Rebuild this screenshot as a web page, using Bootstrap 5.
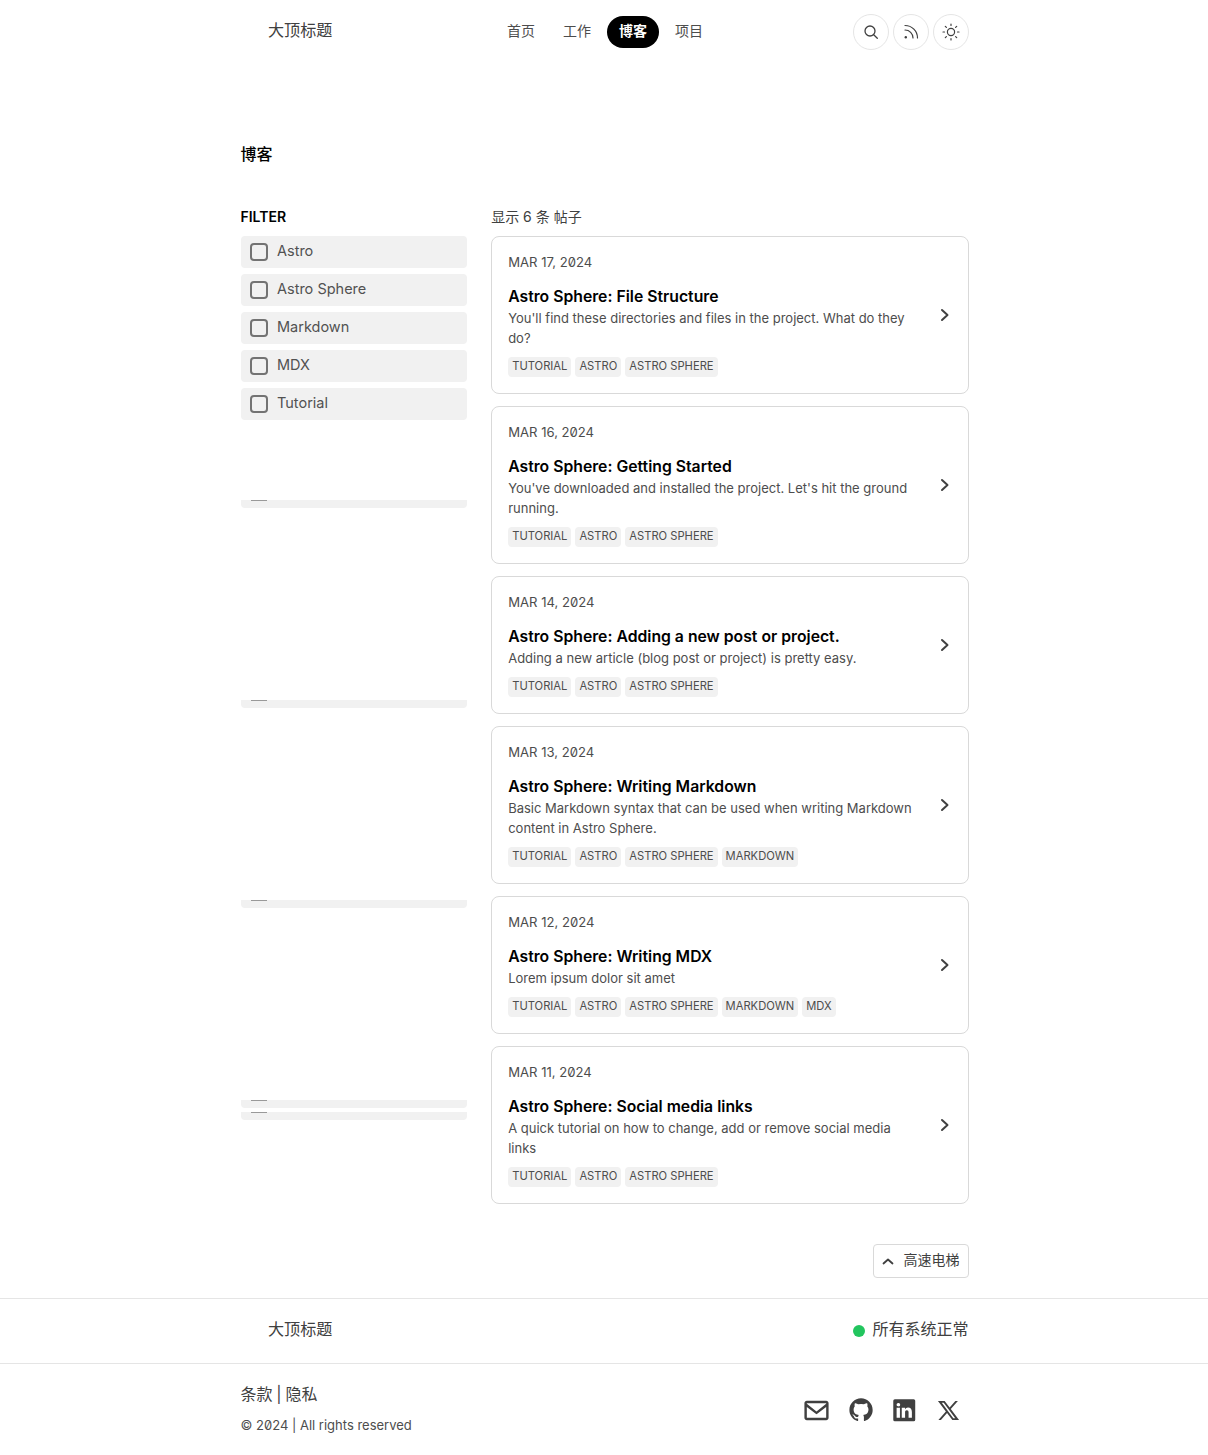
<!DOCTYPE html>
<html lang="zh">
<head>
<meta charset="utf-8">
<title>博客</title>
<link href="https://cdn.jsdelivr.net/npm/bootstrap@5.3.0/dist/css/bootstrap.min.css" rel="stylesheet">
<style>
body{font-family:Inter,"Noto Sans CJK SC",sans-serif;color:#404040;font-size:14px;line-height:20px;background:#fff}
.shell{width:728px;margin-left:240.5px}
.top-bar{height:64px;padding-top:14px}
.brand{width:92.5px;padding-left:27.5px;font-size:16.1px;line-height:32px;font-weight:400;color:#404040;text-decoration:none;white-space:nowrap}
.foot-inner .brand{margin-bottom:5px}
.main-nav{margin-left:162px;height:32px;margin-top:2px}
.main-nav a{padding:5px 12px 7px;line-height:20px;color:#4d4d4d;text-decoration:none;border-radius:999px;font-size:14px}
.main-nav a.on{background:#000;color:#fff;font-weight:600}
.round-btn{width:36px;height:36px;border:1px solid #e5e5e5;border-radius:50%;color:#404040}
.page-title{font-size:16px;line-height:24px;font-weight:500;color:#000;margin:78px 0 0}
.columns{margin-top:41px;gap:24px}
.side{width:226.67px;flex:none}
.content{flex:1;min-width:0}
.head-line{height:20px;margin-bottom:9px}
.filter-head{font-size:14px;font-weight:600;color:#000;line-height:20px;text-transform:uppercase}
.filter-item{height:32px;background:#f1f1f1;border-radius:4px;margin-bottom:6px;padding:0 9.5px;font-size:14.5px;color:#525252;gap:9px}
.filter-item span:last-child{margin-bottom:2px}
.box{width:18px;height:18px;border:2px solid #737373;border-radius:4px;flex:none}
.stub{height:8px;background:#f1f1f1;border-radius:0 0 4px 4px;padding-left:10.5px}
.stub i{display:block;width:16px;height:1px;background:#999}
.s1{margin-top:80px}.s2,.s3,.s4{margin-top:192px}.s5{margin-top:4px}
.post{border:1px solid #d9d9d9;border-radius:8px;padding:15px 16px 16px;margin-bottom:12px;color:#4d4d4d}
.post:last-child{margin-bottom:0}
.post-date{font-size:13.1px;line-height:20px;text-transform:uppercase;margin-bottom:12px;font-feature-settings:"zero"}
.post-title{font-size:15.75px;line-height:24px;font-weight:600;color:#000;margin:0 0 -1px;padding-top:1px}
.post-desc{font-size:13px;line-height:20px;margin:0}
.tags{margin-top:9px;gap:4px}
.chip{height:20px;background:#f1f1f1;border-radius:4px;padding:0 4px;font-size:11.2px;line-height:18px;text-transform:uppercase}
.up-btn{width:96px;height:34px;border:1px solid #d9d9d9;border-radius:4px;margin-top:40px;margin-left:auto;font-size:14px;color:#404040;gap:9px;padding-left:7px}
.up-btn span{margin-bottom:2px}
.foot-row{border-top:1px solid #e5e5e5;margin-top:20px}
.foot-inner{height:64px}
.status{font-size:16px;gap:7px;color:#404040}
.status span:last-child{margin-bottom:5px}
.dot{width:12px;height:12px;border-radius:50%;background:#22c55e}
.foot-low{border-top:1px solid #e5e5e5;height:91px;padding-top:20px}
.legal{font-size:16px;line-height:20px;margin-bottom:11px;word-spacing:-.7px}
.copy{font-size:13px;line-height:20px;font-feature-settings:"zero";color:#4d4d4d}
.socials{gap:4px;margin-top:6px}
.soc{width:40px;height:40px;color:#404040}
.soc-envelope{width:29px;height:29px}
.soc-github{width:28px;height:28px}
.soc-linkedin{width:26.500px;height:26.500px}
.soc-x{width:23px;height:23px}
svg{display:block}
</style>
</head>
<body>
<header class="shell top-bar d-flex">
  <a class="brand" href="#">大顶标题</a>
  <nav class="main-nav d-flex gap-1">
    <a href="#">首页</a><a href="#">工作</a><a class="on" href="#">博客</a><a href="#">项目</a>
  </nav>
  <div class="ms-auto d-flex gap-1">
    <div class="round-btn d-flex align-items-center justify-content-center">
      <svg width="18" height="18" viewBox="0 0 18 18" fill="none" stroke="currentColor" stroke-width="1.3" stroke-linecap="round"><circle cx="8" cy="8" r="5"/><path d="M11.7 11.7l3.6 3.6"/></svg>
    </div>
    <div class="round-btn d-flex align-items-center justify-content-center">
      <svg width="18" height="18" viewBox="0 0 18 18" fill="none" stroke="currentColor" stroke-width="1.2" stroke-linecap="round"><path d="M3 2.500c7 0 12.500 5.500 12.500 12.500"/><path d="M3 7c4.500 0 8 3.500 8 8"/><circle cx="3.800" cy="14.200" r="1.200" fill="currentColor" stroke="none"/></svg>
    </div>
    <div class="round-btn d-flex align-items-center justify-content-center">
      <svg width="18" height="18" viewBox="0 0 18 18" fill="none" stroke="currentColor" stroke-width="1.200" stroke-linecap="round"><circle cx="9" cy="9" r="3.600"/><path d="M9 1v1.500M9 15.500V17M1 9h1.500M15.500 9H17M3.300 3.300l1.100 1.100M13.600 13.600l1.100 1.100M3.300 14.700l1.100-1.100M13.600 4.400l1.100-1.100"/></svg>
    </div>
  </div>
</header>

<main class="shell">
  <h1 class="page-title">博客</h1>
  <div class="columns d-flex">
    <aside class="side">
      <div class="head-line filter-head">Filter</div>
      <div class="filter-item d-flex align-items-center"><span class="box"></span><span>Astro</span></div>
      <div class="filter-item d-flex align-items-center"><span class="box"></span><span>Astro Sphere</span></div>
      <div class="filter-item d-flex align-items-center"><span class="box"></span><span>Markdown</span></div>
      <div class="filter-item d-flex align-items-center"><span class="box"></span><span>MDX</span></div>
      <div class="filter-item d-flex align-items-center"><span class="box"></span><span>Tutorial</span></div>
      <div class="stub s1"><i></i></div>
      <div class="stub s2"><i></i></div>
      <div class="stub s3"><i></i></div>
      <div class="stub s4"><i></i></div>
      <div class="stub s5"><i></i></div>
    </aside>
    <section class="content">
      <div class="head-line">显示 6 条 帖子</div>

      <article class="post d-flex align-items-center">
        <div class="flex-grow-1">
          <div class="post-date">Mar 17, 2024</div>
          <h2 class="post-title">Astro Sphere: File Structure</h2>
          <p class="post-desc">You'll find these directories and files in the project. What do they do?</p>
          <div class="tags d-flex"><span class="chip">Tutorial</span><span class="chip">Astro</span><span class="chip">Astro Sphere</span></div>
        </div>
        <svg class="flex-shrink-0" width="32" height="24" viewBox="0 0 32 24" fill="none" stroke="#404040" stroke-width="2" stroke-linecap="round" stroke-linejoin="round"><path d="M22 7l5.500 5-5.500 5"/></svg>
      </article>

      <article class="post d-flex align-items-center">
        <div class="flex-grow-1">
          <div class="post-date">Mar 16, 2024</div>
          <h2 class="post-title">Astro Sphere: Getting Started</h2>
          <p class="post-desc">You've downloaded and installed the project. Let's hit the ground running.</p>
          <div class="tags d-flex"><span class="chip">Tutorial</span><span class="chip">Astro</span><span class="chip">Astro Sphere</span></div>
        </div>
        <svg class="flex-shrink-0" width="32" height="24" viewBox="0 0 32 24" fill="none" stroke="#404040" stroke-width="2" stroke-linecap="round" stroke-linejoin="round"><path d="M22 7l5.500 5-5.500 5"/></svg>
      </article>

      <article class="post d-flex align-items-center">
        <div class="flex-grow-1">
          <div class="post-date">Mar 14, 2024</div>
          <h2 class="post-title">Astro Sphere: Adding a new post or project.</h2>
          <p class="post-desc">Adding a new article (blog post or project) is pretty easy.</p>
          <div class="tags d-flex"><span class="chip">Tutorial</span><span class="chip">Astro</span><span class="chip">Astro Sphere</span></div>
        </div>
        <svg class="flex-shrink-0" width="32" height="24" viewBox="0 0 32 24" fill="none" stroke="#404040" stroke-width="2" stroke-linecap="round" stroke-linejoin="round"><path d="M22 7l5.500 5-5.500 5"/></svg>
      </article>

      <article class="post d-flex align-items-center">
        <div class="flex-grow-1">
          <div class="post-date">Mar 13, 2024</div>
          <h2 class="post-title">Astro Sphere: Writing Markdown</h2>
          <p class="post-desc">Basic Markdown syntax that can be used when writing Markdown content in Astro Sphere.</p>
          <div class="tags d-flex"><span class="chip">Tutorial</span><span class="chip">Astro</span><span class="chip">Astro Sphere</span><span class="chip">Markdown</span></div>
        </div>
        <svg class="flex-shrink-0" width="32" height="24" viewBox="0 0 32 24" fill="none" stroke="#404040" stroke-width="2" stroke-linecap="round" stroke-linejoin="round"><path d="M22 7l5.500 5-5.500 5"/></svg>
      </article>

      <article class="post d-flex align-items-center">
        <div class="flex-grow-1">
          <div class="post-date">Mar 12, 2024</div>
          <h2 class="post-title">Astro Sphere: Writing MDX</h2>
          <p class="post-desc">Lorem ipsum dolor sit amet</p>
          <div class="tags d-flex"><span class="chip">Tutorial</span><span class="chip">Astro</span><span class="chip">Astro Sphere</span><span class="chip">Markdown</span><span class="chip">MDX</span></div>
        </div>
        <svg class="flex-shrink-0" width="32" height="24" viewBox="0 0 32 24" fill="none" stroke="#404040" stroke-width="2" stroke-linecap="round" stroke-linejoin="round"><path d="M22 7l5.500 5-5.500 5"/></svg>
      </article>

      <article class="post d-flex align-items-center">
        <div class="flex-grow-1">
          <div class="post-date">Mar 11, 2024</div>
          <h2 class="post-title">Astro Sphere: Social media links</h2>
          <p class="post-desc">A quick tutorial on how to change, add or remove social media links</p>
          <div class="tags d-flex"><span class="chip">Tutorial</span><span class="chip">Astro</span><span class="chip">Astro Sphere</span></div>
        </div>
        <svg class="flex-shrink-0" width="32" height="24" viewBox="0 0 32 24" fill="none" stroke="#404040" stroke-width="2" stroke-linecap="round" stroke-linejoin="round"><path d="M22 7l5.500 5-5.500 5"/></svg>
      </article>
    </section>
  </div>
  <div class="up-btn d-flex align-items-center">
    <svg width="14" height="14" viewBox="0 0 14 14" fill="none" stroke="#404040" stroke-width="1.800" stroke-linecap="round" stroke-linejoin="round"><path d="M2.500 9.500L7 5.500l4.500 4"/></svg>
    <span>高速电梯</span>
  </div>
</main>

<footer>
  <div class="foot-row">
    <div class="shell foot-inner d-flex align-items-center justify-content-between">
      <a class="brand" href="#">大顶标题</a>
      <div class="status d-flex align-items-center"><span class="dot"></span><span>所有系统正常</span></div>
    </div>
  </div>
  <div class="foot-low">
    <div class="shell d-flex justify-content-between">
      <div>
        <div class="legal">条款 | 隐私</div>
        <div class="copy">© 2024 | All rights reserved</div>
      </div>
      <div class="socials d-flex">
        <div class="soc d-flex align-items-center justify-content-center"><svg class="soc-envelope" viewBox="0 0 24 24" fill="currentColor"><path d="M20 4H4c-1.103 0-2 .897-2 2v12c0 1.103.897 2 2 2h16c1.103 0 2-.897 2-2V6c0-1.103-.897-2-2-2zm0 2v.511l-8 6.223-8-6.222V6h16zM4 18V9.044l7.386 5.745a.994.994 0 0 0 1.228 0L20 9.044 20.002 18H4z"/></svg></div>
        <div class="soc d-flex align-items-center justify-content-center"><svg class="soc-github" viewBox="0 0 24 24" fill="currentColor"><path fill-rule="evenodd" d="M12.026 2c-5.509 0-9.974 4.465-9.974 9.974 0 4.406 2.857 8.145 6.821 9.465.499.09.679-.217.679-.481 0-.237-.008-.865-.011-1.696-2.775.602-3.361-1.338-3.361-1.338-.452-1.152-1.107-1.459-1.107-1.459-.905-.619.069-.605.069-.605 1.002.07 1.527 1.028 1.527 1.028.89 1.524 2.336 1.084 2.902.829.091-.645.351-1.085.635-1.334-2.214-.251-4.542-1.107-4.542-4.93 0-1.087.389-1.979 1.024-2.675-.101-.253-.446-1.268.099-2.64 0 0 .837-.269 2.742 1.021a9.582 9.582 0 0 1 2.496-.336 9.554 9.554 0 0 1 2.496.336c1.906-1.291 2.742-1.021 2.742-1.021.545 1.372.2 2.387.099 2.64.64.696 1.024 1.587 1.024 2.675 0 3.833-2.33 4.675-4.552 4.922.355.308.675.916.675 1.846 0 1.334-.012 2.41-.012 2.737 0 .267.178.577.687.479C19.146 20.115 22 16.379 22 11.974 22 6.465 17.535 2 12.026 2z"/></svg></div>
        <div class="soc d-flex align-items-center justify-content-center"><svg class="soc-linkedin" viewBox="0 0 24 24" fill="currentColor"><path d="M20.47,2H3.53A1.45,1.45,0,0,0,2.06,3.43V20.57A1.45,1.45,0,0,0,3.53,22H20.47a1.45,1.45,0,0,0,1.47-1.43V3.43A1.45,1.45,0,0,0,20.47,2ZM8.09,18.74h-3v-9h3ZM6.59,8.48h0a1.56,1.56,0,1,1,0-3.12,1.57,1.57,0,1,1,0,3.12ZM18.91,18.74h-3V13.91c0-1.21-.43-2-1.52-2A1.65,1.65,0,0,0,12.85,13a2,2,0,0,0-.1.73v5h-3s0-8.18,0-9h3V11A3,3,0,0,1,15.46,9.5c2,0,3.45,1.29,3.45,4.06Z"/></svg></div>
        <div class="soc d-flex align-items-center justify-content-center"><svg class="soc-x" viewBox="0 0 24 24" fill="currentColor"><path d="M8 2H1L9.26 13.014 1.45 22H4.1L10.488 14.651 16 22H23L14.392 10.522 21.8 2H19.15L13.164 8.886 8 2ZM17 20L5 4H7L19 20H17Z"/></svg></div>
      </div>
    </div>
  </div>
</footer>
<script src="https://cdn.jsdelivr.net/npm/bootstrap@5.3.0/dist/js/bootstrap.bundle.min.js"></script>
</body>
</html>
